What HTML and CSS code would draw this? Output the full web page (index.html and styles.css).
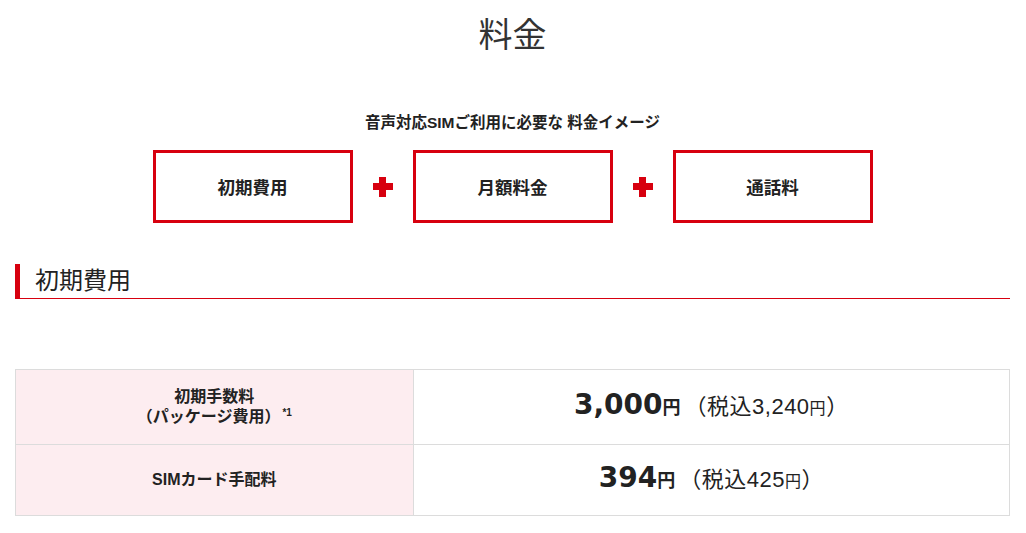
FILE: index.html
```html
<!DOCTYPE html>
<html lang="ja">
<head>
<meta charset="utf-8">
<title>料金</title>
<link rel="stylesheet" href="styles.css">
</head>
<body>
<main class="page">
  <h1 class="page-title">料金</h1>

  <section class="fee-image">
    <p class="fee-image-lead">音声対応SIMご利用に必要な 料金イメージ</p>
    <div class="fee-image-boxes">
      <div class="fee-image-box">初期費用</div>
      <span class="fee-image-plus" aria-hidden="true"></span>
      <div class="fee-image-box">月額料金</div>
      <span class="fee-image-plus" aria-hidden="true"></span>
      <div class="fee-image-box">通話料</div>
    </div>
  </section>

  <h2 class="section-heading">初期費用</h2>

  <table class="fee-table">
    <tr class="fee-row">
      <th class="fee-label">初期手数料<br>（パッケージ費用）<sup class="note">*1</sup></th>
      <td class="fee-value">
        <span class="price-num">3,000</span><span class="price-yen">円</span><span class="price-tax">（税込<span class="tax-num">3,240</span><span class="tax-yen">円</span>）</span>
      </td>
    </tr>
    <tr class="fee-row">
      <th class="fee-label">SIMカード手配料</th>
      <td class="fee-value">
        <span class="price-num">394</span><span class="price-yen">円</span><span class="price-tax">（税込<span class="tax-num">425</span><span class="tax-yen">円</span>）</span>
      </td>
    </tr>
  </table>
</main>
</body>
</html>
```

FILE: styles.css
```css
html, body {
  margin: 0;
  padding: 0;
  background: #ffffff;
}

body {
  font-family: "Liberation Sans", "Noto Sans CJK JP", sans-serif;
  color: #222222;
}

.page {
  margin: 0 16px 0 15px;
  padding-bottom: 20px;
}

.page-title {
  margin: 0;
  padding-top: 13px;
  font-size: 34px;
  font-weight: 400;
  line-height: 44px;
  text-align: center;
  color: #333333;
}

.fee-image {
  margin-top: 54px;
}

.fee-image-lead {
  margin: 0;
  font-size: 15.5px;
  font-weight: 700;
  line-height: 24px;
  text-align: center;
  color: #222222;
}

.fee-image-boxes {
  margin-top: 15px;
  display: flex;
  justify-content: center;
  align-items: center;
}

.fee-image-box {
  box-sizing: border-box;
  width: 200px;
  height: 73px;
  border: 3px solid #d7000f;
  display: flex;
  align-items: center;
  justify-content: center;
  font-size: 17.5px;
  font-weight: 700;
  color: #222222;
}

.fee-image-plus {
  position: relative;
  width: 60px;
  height: 20px;
}

.fee-image-plus::before,
.fee-image-plus::after {
  content: "";
  position: absolute;
  background: #d7000f;
}

.fee-image-plus::before {
  left: 20px;
  top: 6.5px;
  width: 20px;
  height: 7px;
}

.fee-image-plus::after {
  left: 26.5px;
  top: 0;
  width: 7px;
  height: 20px;
}

.section-heading {
  margin: 41px 0 0;
  padding-left: 15px;
  border-left: 5px solid #d7000f;
  border-bottom: 1px solid #d7000f;
  font-size: 24px;
  font-weight: 400;
  line-height: 34px;
  color: #222222;
}

.fee-table {
  margin-top: 70px;
  width: 100%;
  border-collapse: collapse;
}

.fee-label,
.fee-value {
  border: 1px solid #dcdcdc;
  text-align: center;
  vertical-align: middle;
}

.fee-label {
  width: 40%;
  padding: 17px 10px;
  background: #fdedf0;
  font-size: 16px;
  font-weight: 700;
  line-height: 20px;
  color: #222222;
}

.note {
  font-size: 10px;
  line-height: 0;
  vertical-align: 6px;
  margin-left: 2px;
}

.fee-value {
  padding: 0 10px;
  line-height: 30px;
  color: #222222;
}

.fee-row:first-child {
  height: 75px;
}

.fee-row:last-child {
  height: 71px;
}

.price-num {
  font-family: "DejaVu Sans", sans-serif;
  font-size: 28px;
  font-weight: 700;
}

.price-yen {
  font-size: 18px;
  font-weight: 700;
}

.price-tax {
  margin-left: 4px;
  font-size: 22px;
  font-weight: 400;
  letter-spacing: 0.5px;
}

.tax-yen {
  font-size: 16px;
}
```
